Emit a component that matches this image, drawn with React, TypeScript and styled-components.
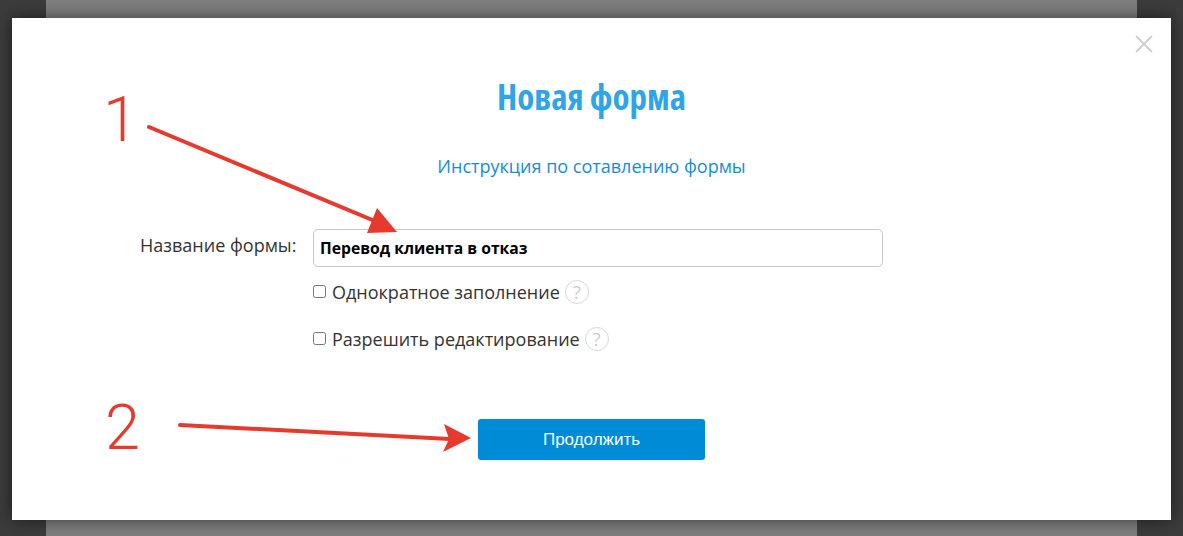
import React from "react";
import styled, { createGlobalStyle } from "styled-components";

const Global = createGlobalStyle`
  html, body {
    margin: 0;
    padding: 0;
    background: #3c3c3c;
  }
  body {
    font-family: "Open Sans", "Liberation Sans", sans-serif;
    overflow: hidden;
  }
`;

const Backdrop = styled.div`
  position: relative;
  width: 1183px;
  height: 536px;
  background: #3c3c3c;
  overflow: hidden;
  display: flex;
  justify-content: center;
`;

const PageBehind = styled.div`
  width: 1091px;
  height: 100%;
  background: #7f7f7f;
`;

const Modal = styled.div`
  position: absolute;
  left: 12px;
  top: 18px;
  width: 1159px;
  height: 502px;
  background: #fff;
  box-shadow: 0 0 16px rgba(0, 0, 0, 0.55);
  display: flex;
  flex-direction: column;
  align-items: center;
`;

const CloseButton = styled.button`
  position: absolute;
  top: 16px;
  right: 17px;
  width: 20px;
  height: 20px;
  padding: 0;
  border: 0;
  background: none;
  line-height: 0;
`;

const Title = styled.h1`
  margin: 55px 0 0;
  height: 48px;
  font-family: "Open Sans", sans-serif;
  font-stretch: 75%;
  font-size: 35px;
  line-height: 48px;
  font-weight: 700;
  color: #2ea5e8;
`;

const HelpLink = styled.a`
  margin-top: 33px;
  font-size: 18px;
  line-height: 24px;
  color: #158ed6;
  text-decoration: none;
`;

const Form = styled.div`
  margin-top: 51px;
  align-self: flex-start;
  margin-left: 129px;
  display: grid;
  grid-template-columns: 172px 570px;
  grid-auto-rows: min-content;
`;

const FieldLabel = styled.label`
  margin-left: -1px;
  font-size: 18px;
  line-height: 24px;
  color: #333;
  padding-top: 4px;
  text-align: left;
`;

const TextInput = styled.input`
  box-sizing: border-box;
  width: 570px;
  height: 38px;
  padding: 0 6px;
  border: 1px solid #c8c8c8;
  border-radius: 5px;
  font-family: "Open Sans", sans-serif;
  font-size: 15.7px;
  font-weight: 700;
  color: #000;
  background: #fff;
  outline: none;
`;

const OptionRow = styled.div<{ $top: number }>`
  grid-column: 2;
  margin-top: ${(p) => p.$top}px;
  height: 28px;
  display: flex;
  align-items: center;
  font-size: 18px;
  line-height: 24px;
  color: #333;
`;

const CheckBox = styled.input`
  appearance: none;
  box-sizing: border-box;
  width: 13px;
  height: 13px;
  margin: -1px 6px 0 0;
  border: 1px solid #767676;
  border-radius: 2.5px;
  background: #fff;
`;

const HelpBadge = styled.span`
  box-sizing: border-box;
  width: 24px;
  height: 24px;
  margin-left: 5px;
  border: 1.5px solid #d8d8d8;
  border-radius: 50%;
  display: flex;
  align-items: center;
  justify-content: center;
  font-size: 18px;
  font-weight: 400;
  color: #cccccc;
`;

const SubmitButton = styled.button`
  position: absolute;
  left: 466px;
  top: 401px;
  width: 227px;
  height: 41px;
  border: 0;
  border-radius: 3px;
  background: #008bd6;
  color: #fff;
  font-family: "Liberation Sans", Arial, sans-serif;
  font-size: 17px;
`;

// red marks drawn over the screenshot
const Annotation = styled.svg`
  position: absolute;
  left: 0;
  top: 0;
  width: 1183px;
  height: 536px;
  pointer-events: none;
`;

const Numeral = styled.text`
  font-family: Roboto, "Liberation Sans", Arial, sans-serif;
  font-size: 63px;
  font-weight: 350;
  fill: #e63a2e;
`;

export default function App() {
  return (
    <>
      <Global />
      <Backdrop>
        <PageBehind />
        <Modal>
          <CloseButton aria-label="Закрыть">
            <svg width="20" height="20" viewBox="0 0 20 20">
              <path d="M2 2 L18 18 M18 2 L2 18" stroke="#cfcfcf" strokeWidth="2" fill="none" />
            </svg>
          </CloseButton>
          <Title>Новая форма</Title>
          <HelpLink href="#">Инструкция по сотавлению формы</HelpLink>
          <Form>
            <FieldLabel>Название формы:</FieldLabel>
            <TextInput readOnly value="Перевод клиента в отказ" />
            <OptionRow $top={11}>
              <CheckBox type="checkbox" />
              Однократное заполнение
              <HelpBadge>?</HelpBadge>
            </OptionRow>
            <OptionRow $top={19}>
              <CheckBox type="checkbox" />
              Разрешить редактирование
              <HelpBadge>?</HelpBadge>
            </OptionRow>
          </Form>
          <SubmitButton>Продолжить</SubmitButton>
        </Modal>
        <Annotation viewBox="0 0 1183 536">
          <Numeral x="103" y="141">1</Numeral>
          <Numeral x="105" y="449">2</Numeral>
          <path d="M149 127 L382 224" stroke="#e63a2e" strokeWidth="4" strokeLinecap="round" fill="none" />
          <path d="M377 208 L397 232 L367 233 Z" fill="#e63a2e" />
          <path d="M180 425 L450 439" stroke="#e63a2e" strokeWidth="4" strokeLinecap="round" fill="none" />
          <path d="M444 424 L471 438 L443 452 L449 439 Z" fill="#e63a2e" />
        </Annotation>
      </Backdrop>
    </>
  );
}
